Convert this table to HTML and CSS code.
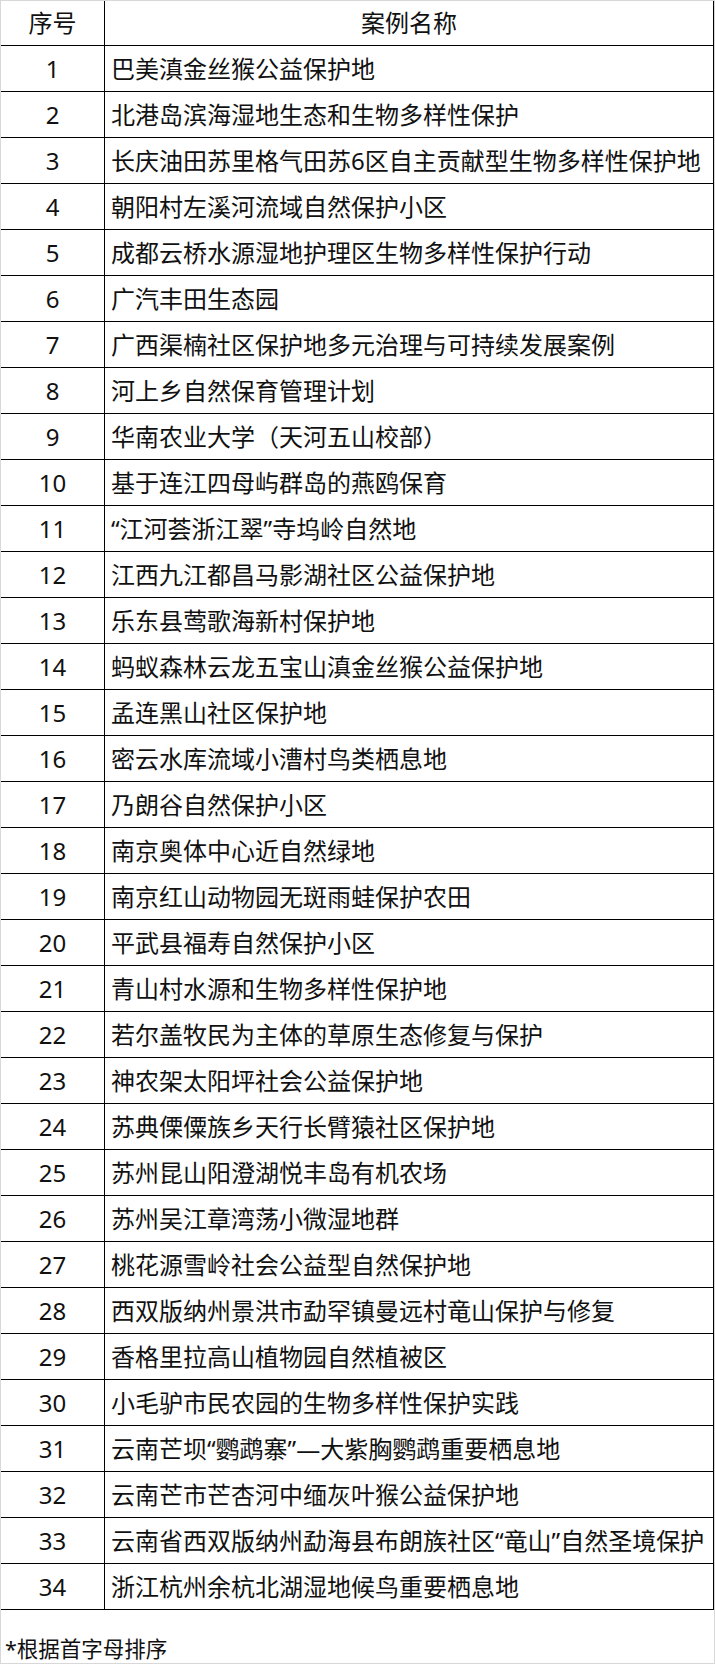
FILE: index.html
```html
<!DOCTYPE html>
<html lang="zh-CN">
<head>
<meta charset="utf-8">
<title>案例名称</title>
<link rel="stylesheet" href="styles.css">
</head>
<body>
<div class="sheet">
  <table class="cases">
    <thead>
      <tr><th class="num">序号</th><th class="name-head">案例名称</th></tr>
    </thead>
    <tbody>
      <tr><td class="num">1</td><td class="name">巴美滇金丝猴公益保护地</td></tr>
      <tr><td class="num">2</td><td class="name">北港岛滨海湿地生态和生物多样性保护</td></tr>
      <tr><td class="num">3</td><td class="name">长庆油田苏里格气田苏6区自主贡献型生物多样性保护地</td></tr>
      <tr><td class="num">4</td><td class="name">朝阳村左溪河流域自然保护小区</td></tr>
      <tr><td class="num">5</td><td class="name">成都云桥水源湿地护理区生物多样性保护行动</td></tr>
      <tr><td class="num">6</td><td class="name">广汽丰田生态园</td></tr>
      <tr><td class="num">7</td><td class="name">广西渠楠社区保护地多元治理与可持续发展案例</td></tr>
      <tr><td class="num">8</td><td class="name">河上乡自然保育管理计划</td></tr>
      <tr><td class="num">9</td><td class="name">华南农业大学（天河五山校部）</td></tr>
      <tr><td class="num">10</td><td class="name">基于连江四母屿群岛的燕鸥保育</td></tr>
      <tr><td class="num">11</td><td class="name">“江河荟浙江翠”寺坞岭自然地</td></tr>
      <tr><td class="num">12</td><td class="name">江西九江都昌马影湖社区公益保护地</td></tr>
      <tr><td class="num">13</td><td class="name">乐东县莺歌海新村保护地</td></tr>
      <tr><td class="num">14</td><td class="name">蚂蚁森林云龙五宝山滇金丝猴公益保护地</td></tr>
      <tr><td class="num">15</td><td class="name">孟连黑山社区保护地</td></tr>
      <tr><td class="num">16</td><td class="name">密云水库流域小漕村鸟类栖息地</td></tr>
      <tr><td class="num">17</td><td class="name">乃朗谷自然保护小区</td></tr>
      <tr><td class="num">18</td><td class="name">南京奥体中心近自然绿地</td></tr>
      <tr><td class="num">19</td><td class="name">南京红山动物园无斑雨蛙保护农田</td></tr>
      <tr><td class="num">20</td><td class="name">平武县福寿自然保护小区</td></tr>
      <tr><td class="num">21</td><td class="name">青山村水源和生物多样性保护地</td></tr>
      <tr><td class="num">22</td><td class="name">若尔盖牧民为主体的草原生态修复与保护</td></tr>
      <tr><td class="num">23</td><td class="name">神农架太阳坪社会公益保护地</td></tr>
      <tr><td class="num">24</td><td class="name">苏典傈僳族乡天行长臂猿社区保护地</td></tr>
      <tr><td class="num">25</td><td class="name">苏州昆山阳澄湖悦丰岛有机农场</td></tr>
      <tr><td class="num">26</td><td class="name">苏州吴江章湾荡小微湿地群</td></tr>
      <tr><td class="num">27</td><td class="name">桃花源雪岭社会公益型自然保护地</td></tr>
      <tr><td class="num">28</td><td class="name">西双版纳州景洪市勐罕镇曼远村竜山保护与修复</td></tr>
      <tr><td class="num">29</td><td class="name">香格里拉高山植物园自然植被区</td></tr>
      <tr><td class="num">30</td><td class="name">小毛驴市民农园的生物多样性保护实践</td></tr>
      <tr><td class="num">31</td><td class="name">云南芒坝“鹦鹉寨”—大紫胸鹦鹉重要栖息地</td></tr>
      <tr><td class="num">32</td><td class="name">云南芒市芒杏河中缅灰叶猴公益保护地</td></tr>
      <tr><td class="num">33</td><td class="name">云南省西双版纳州勐海县布朗族社区“竜山”自然圣境保护</td></tr>
      <tr><td class="num">34</td><td class="name">浙江杭州余杭北湖湿地候鸟重要栖息地</td></tr>
    </tbody>
  </table>
  <p class="note">*根据首字母排序</p>
</div>
</body>
</html>
```

FILE: styles.css
```css
html, body {
  margin: 0;
  padding: 0;
  background: #ffffff;
}

.sheet {
  box-sizing: border-box;
  width: 715px;
  height: 1664px;
  border: 1px solid #d8d8d8;
  overflow: hidden;
  font-family: "Noto Sans", "Noto Sans CJK SC", sans-serif;
  color: #111111;
}

.cases {
  width: 713px;
  border-collapse: separate;
  border-spacing: 0;
  table-layout: fixed;
}

.cases th,
.cases td {
  box-sizing: border-box;
  padding: 0;
  font-size: 24px;
  font-weight: normal;
  line-height: 30px;
  vertical-align: middle;
  border-bottom: 1px solid #000;
  white-space: nowrap;
}

.cases thead th {
  height: 45px;
}

.cases tbody td {
  height: 46px;
}

.cases .num {
  width: 104px;
  text-align: center;
  border-right: 1px solid #000;
}

.cases .name-head {
  text-align: center;
  border-right: 1px solid #000;
}

.cases .name {
  text-align: left;
  padding-left: 6px;
  border-right: 1px solid #000;
}

.note {
  margin: 26px 0 0 4px;
  font-size: 21.5px;
  line-height: 26px;
}
```
